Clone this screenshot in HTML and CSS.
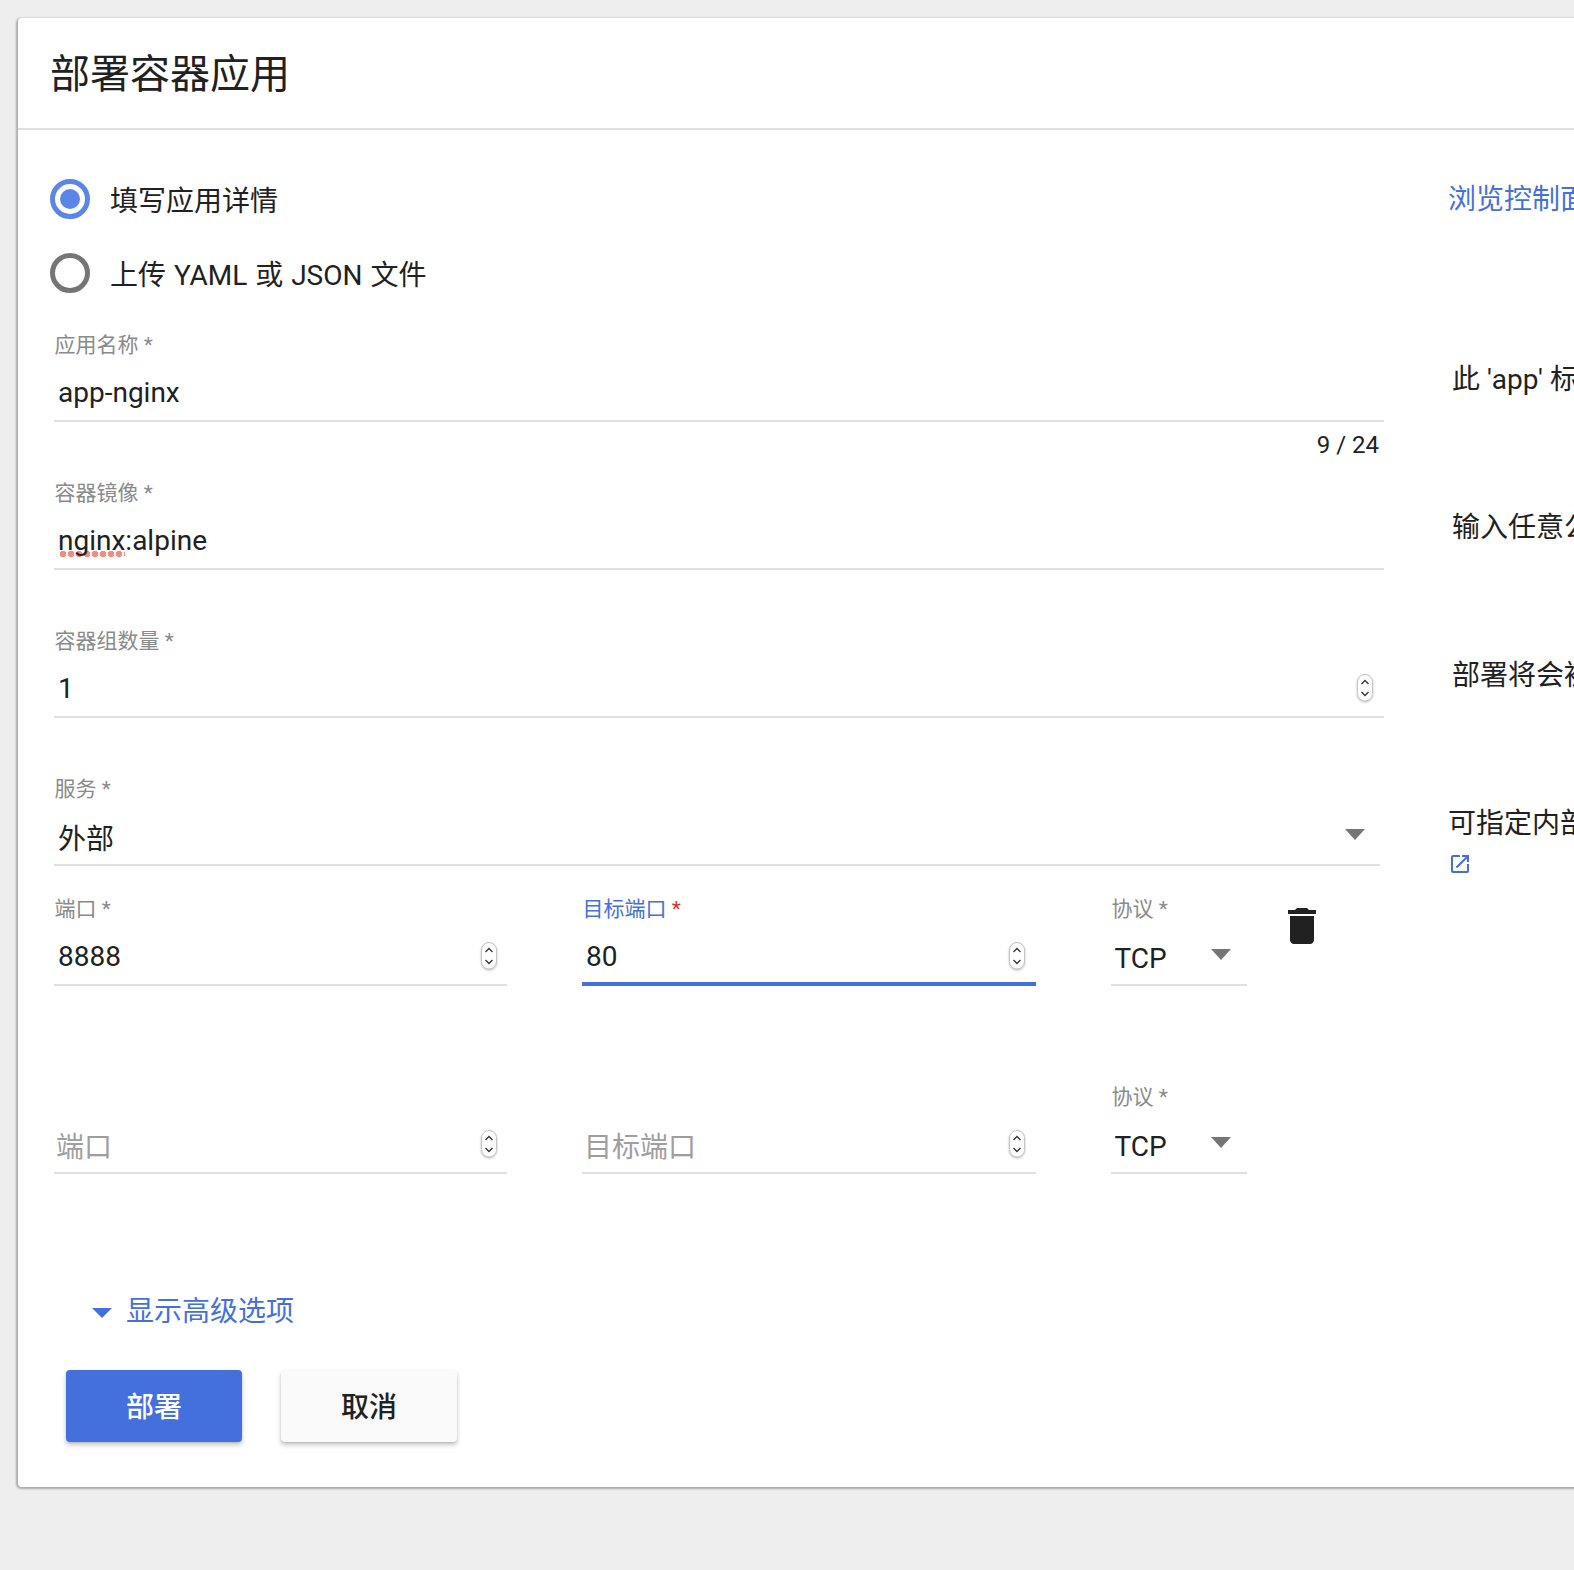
FILE: index.html
```html
<!DOCTYPE html>
<html lang="zh-CN">
<head>
<meta charset="utf-8">
<title>部署容器应用</title>
<link rel="stylesheet" href="styles.css">
</head>
<body>
<svg class="defs" width="0" height="0" aria-hidden="true">
  <symbol id="spin" viewBox="0 0 16 28">
    <rect x="0.5" y="0.5" width="15" height="26.5" rx="7.5" fill="#fff" stroke="#c4c4c4"/>
    <path d="M4.5 10 8 6.5 11.5 10M4.5 18 8 21.5 11.5 18" fill="none" stroke="#333" stroke-width="1.3"/>
  </symbol>
</svg>
<main class="card">
  <header class="card-head"><h1 class="title">部署容器应用</h1></header>
  <div class="card-body">
    <div class="row radio-row">
      <label class="radio-item"><span class="radio radio-on"></span><span class="radio-text">填写应用详情</span></label>
      <a class="help link">浏览控制面板</a>
    </div>
    <div class="row radio-row radio-last">
      <label class="radio-item"><span class="radio"></span><span class="radio-text">上传 YAML 或 JSON 文件</span></label>
    </div>

    <div class="row row-field">
      <div class="col-form">
        <div class="field">
          <div class="label">应用名称 *</div>
          <div class="value">app-nginx</div>
        </div>
        <div class="counter">9 / 24</div>
      </div>
      <p class="help help-in">此 'app' 标签</p>
    </div>

    <div class="row row-field">
      <div class="col-form">
        <div class="field">
          <div class="label">容器镜像 *</div>
          <div class="value"><span class="spell">nginx</span>:alpine</div>
        </div>
      </div>
      <p class="help help-in">输入任意公共</p>
    </div>

    <div class="row row-field">
      <div class="col-form">
        <div class="field">
          <div class="label">容器组数量 *</div>
          <div class="value"><span class="grow">1</span><svg class="spinner"><use href="#spin"/></svg></div>
        </div>
      </div>
      <p class="help help-in">部署将会被</p>
    </div>

    <div class="row row-service">
      <div class="col-form">
        <div class="field field-select">
          <div class="label">服务 *</div>
          <div class="value value-service"><span class="grow">外部</span><span class="caret"></span></div>
        </div>
      </div>
      <div class="help help-service">
        <p class="help-line">可指定内部</p>
        <svg class="ext" viewBox="0 0 24 24"><path d="M19 19H5V5h7V3H5c-1.11 0-2 .9-2 2v14c0 1.1.89 2 2 2h14c1.1 0 2-.9 2-2v-7h-2v7zM14 3v2h3.59l-9.83 9.83 1.41 1.41L19 6.41V10h2V3h-7z"/></svg>
      </div>
    </div>

    <div class="ports">
      <div class="field port">
        <div class="label">端口 *</div>
        <div class="value value-port"><span class="grow">8888</span><svg class="spinner"><use href="#spin"/></svg></div>
      </div>
      <div class="field port field-focus">
        <div class="label label-focus">目标端口 <span class="req">*</span></div>
        <div class="value value-port"><span class="grow">80</span><svg class="spinner"><use href="#spin"/></svg></div>
      </div>
      <div class="field proto">
        <div class="label">协议 *</div>
        <div class="value value-port value-proto"><span class="grow">TCP</span><span class="caret"></span></div>
      </div>
      <svg class="trash" viewBox="0 0 24 24"><path d="M6 19c0 1.1.9 2 2 2h8c1.1 0 2-.9 2-2V7H6v12zM19 4h-3.5l-1-1h-5l-1 1H5v2h14V4z"/></svg>
    </div>

    <div class="ports ports-last">
      <div class="field port">
        <div class="label"></div>
        <div class="value value-port placeholder"><span class="grow">端口</span><svg class="spinner"><use href="#spin"/></svg></div>
      </div>
      <div class="field port">
        <div class="label"></div>
        <div class="value value-port placeholder"><span class="grow">目标端口</span><svg class="spinner"><use href="#spin"/></svg></div>
      </div>
      <div class="field proto">
        <div class="label">协议 *</div>
        <div class="value value-port value-proto"><span class="grow">TCP</span><span class="caret"></span></div>
      </div>
    </div>

    <a class="advanced"><span class="caret caret-blue"></span><span class="advanced-text">显示高级选项</span></a>

    <div class="actions">
      <button class="btn btn-primary" type="button">部署</button>
      <button class="btn" type="button">取消</button>
    </div>
  </div>
</main>
</body>
</html>
```
FILE: styles.css
```css
* { box-sizing: border-box; }

html, body {
  margin: 0;
  height: 1570px;
  overflow: hidden;
  background: #eeeeee;
}

body {
  padding: 18px 0 0 18px;
  font-family: Roboto, "Noto Sans CJK SC", sans-serif;
  font-size: 28px;
  color: #212121;
}

.defs { position: absolute; }

.card {
  width: 1700px;
  background: #fff;
  border-radius: 4px;
  box-shadow: -1px 1px 2px 1px rgba(0, 0, 0, .28);
}

.card-head {
  height: 112px;
  padding: 0 0 0 32px;
  border-bottom: 2px solid #e0e0e0;
}

.title {
  margin: 0;
  font-size: 40px;
  font-weight: 400;
  line-height: 114px;
}

.card-body { padding: 32px 0 45px 36px; }

.row { display: flex; }

.col-form { width: 1330px; flex: none; }

.radio-row { height: 74px; align-items: center; }
.radio-last { margin-bottom: 23px; }

.radio-item {
  width: 1331px;
  flex: none;
  margin-left: -4px;
  display: flex;
  align-items: center;
  gap: 20px;
  line-height: 40px;
  word-spacing: 1px;
}

.radio-text { padding-top: 5px; }

.radio {
  width: 40px;
  height: 40px;
  border: 5px solid #757575;
  border-radius: 50%;
  display: flex;
  align-items: center;
  justify-content: center;
}

.radio-on { border-color: #5b85e6; }
.radio-on::after {
  content: "";
  width: 20px;
  height: 20px;
  border-radius: 50%;
  background: #5b85e6;
}

.help {
  margin: 0 0 0 64px;
  line-height: 34px;
  white-space: nowrap;
}

.link { color: #4470dd; margin-left: 67px; padding-top: 2px; }

.help-in { padding: 30px 0 0 4px; }

.help-service { padding-top: 30px; }
.help-line { margin: 0; }

.ext {
  display: block;
  width: 24px;
  height: 24px;
  margin: 11px 0 0 0;
  fill: #4470dd;
}

.row-field { height: 148px; }
.row-service { height: 120px; }

.field { border-bottom: 2px solid #e0e0e0; }

.field-select { width: 1326px; }

.label {
  height: 24px;
  padding-left: 0.5px;
  font-size: 21px;
  line-height: 24px;
  color: #8a8a8a;
}

.row .label { margin-bottom: 12px; }

.label-focus { color: #4470dd; }
.req { color: #d93025; }

.value {
  display: flex;
  align-items: flex-start;
  height: 51px;
  padding: 0 11px 0 4px;
  line-height: 48px;
}

.grow { flex: 1; }

.value-service { padding-right: 15px; line-height: 54px; }
.value-service .caret { margin-top: 16px; }

.value-port { height: 63px; padding-top: 13px; line-height: 46px; }
.value-proto { padding-left: 3.5px; padding-right: 16px; line-height: 50px; }
.value-proto .caret { margin-top: 15px; }

.placeholder { color: #9e9e9e; line-height: 52px; padding-left: 2px; }

.spinner {
  flex: none;
  width: 16px;
  height: 28px;
  margin-top: 9px;
  filter: drop-shadow(0 1px 1px rgba(0, 0, 0, .25));
}

.value-port .spinner { margin-top: 8px; }

.port:first-child .value-port { padding-right: 10px; }

.caret {
  flex: none;
  width: 0;
  height: 0;
  border-left: 10.5px solid transparent;
  border-right: 10.5px solid transparent;
  border-top: 11px solid #757575;
}

.counter {
  margin-top: 6px;
  padding-right: 5px;
  font-size: 24px;
  line-height: 34px;
  text-align: right;
}

.spell {
  background-image: radial-gradient(circle at 5px 3px, rgba(238, 100, 85, .75) 3px, transparent 3.5px);
  background-size: 8px 6px;
  background-repeat: repeat-x;
  background-position: 0 calc(100% - 8px);
}

.ports { display: flex; align-items: flex-start; height: 188px; }

.ports-last { height: 209px; }

.port { width: 453px; margin-right: 75px; }
.port + .port { width: 454px; }

.proto { width: 136px; }

.field-focus { border-bottom: 4px solid #4470dd; margin-bottom: -2px; }
.field-focus .value-port { height: 61px; }

.trash {
  flex: none;
  width: 48px;
  height: 48px;
  margin: 5px 0 0 31px;
  fill: #212121;
}

.advanced {
  display: flex;
  align-items: center;
  gap: 14px;
  margin-left: 38px;
  line-height: 34px;
  color: #4470dd;
}

.advanced-text { padding-top: 1px; }

.caret-blue {
  border-left-width: 10px;
  border-right-width: 10px;
  border-top: 10px solid #4470dd;
  margin-top: 3px;
}

.actions {
  display: flex;
  gap: 39px;
  margin: 41px 0 0 12px;
}

.btn {
  width: 176px;
  height: 72px;
  padding: 0 0 2px;
  border: 0;
  border-radius: 4px;
  background: #fafafa;
  color: #212121;
  font-family: inherit;
  font-size: 28px;
  font-weight: 500;
  box-shadow: 0 3px 5px rgba(0, 0, 0, .22), 0 1px 2px rgba(0, 0, 0, .1);
}

.btn-primary { background: #4470dd; color: #fff; }
```
